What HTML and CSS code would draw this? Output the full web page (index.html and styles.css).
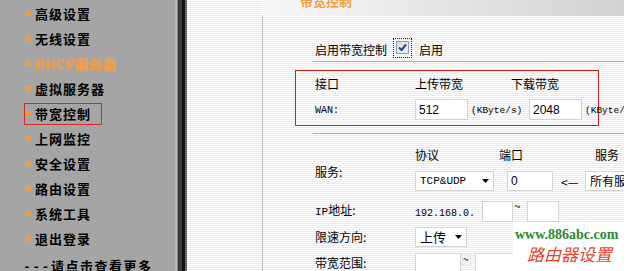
FILE: index.html
```html
<!DOCTYPE html>
<html lang="zh-CN">
<head>
<meta charset="utf-8">
<title>带宽控制</title>
<link rel="stylesheet" href="styles.css">
</head>
<body>
<div class="page">
  <nav class="sidebar">
    <div class="nav-item"><span class="nav-label"><span class="dot"></span>高级设置</span></div>
    <div class="nav-item"><span class="nav-label"><span class="dot"></span>无线设置</span></div>
    <div class="nav-item glow"><span class="nav-label"><span class="dot"></span>DHCP服务器</span></div>
    <div class="nav-item"><span class="nav-label"><span class="dot"></span>虚拟服务器</span></div>
    <div class="nav-item active"><span class="nav-label"><span class="dot"></span>带宽控制</span></div>
    <div class="nav-item"><span class="nav-label"><span class="dot"></span>上网监控</span></div>
    <div class="nav-item"><span class="nav-label"><span class="dot"></span>安全设置</span></div>
    <div class="nav-item"><span class="nav-label"><span class="dot"></span>路由设置</span></div>
    <div class="nav-item"><span class="nav-label"><span class="dot"></span>系统工具</span></div>
    <div class="nav-item"><span class="nav-label"><span class="dot"></span>退出登录</span></div>
    <div class="nav-more"><span class="dashes">---</span>请点击查看更多</div>
  </nav>
  <div class="divider"></div>
  <div class="content">
    <div class="gutter"></div>
    <div class="panel">
      <div class="panel-header"><span class="title">带宽控制</span></div>
      <div class="panel-body">
        <div class="enable-row">
          <span class="enable-text">启用带宽控制</span>
          <span class="check-focus"><span class="check-box"><svg width="11" height="11" viewBox="0 0 11 11"><path d="M2 5.5 L4.5 8 L9 2.5" fill="none" stroke="#22449a" stroke-width="2"/></svg></span></span>
          <span class="enable-on">启用</span>
        </div>
        <div class="bw-box">
          <div class="bw-head">
            <span class="col-label">接口</span>
            <span class="col-up">上传带宽</span>
            <span>下载带宽</span>
          </div>
          <div class="bw-row">
            <span class="col-label mono-s">WAN:</span>
            <span class="field w53">512</span>
            <span class="unit">(KByte/s)</span>
            <span class="field w53 gap3">2048</span>
            <span class="unit">(KByte/s)</span>
          </div>
        </div>
        <div class="sep"></div>
        <div class="svc">
          <span class="row-label svc-label">服务:</span>
          <div class="svc-cols">
            <div class="svc-head">
              <span class="h-proto">协议</span>
              <span class="h-port">端口</span>
              <span>服务</span>
            </div>
            <div class="svc-row">
              <span class="select w79"><span class="mono">TCP&amp;UDP</span><svg class="arrow" width="7" height="4" viewBox="0 0 7 4"><path d="M0 0H7L3.5 4Z" fill="#000"/></svg></span>
              <span class="field w46 port">0</span>
              <span class="back">&lt;—</span>
              <span class="select w80">所有服务</span>
            </div>
          </div>
        </div>
        <div class="form-row ip-row">
          <span class="row-label"><span class="mono-l">IP</span>地址:</span>
          <span class="ip-prefix">192.168.0.</span>
          <span class="field w31"></span>
          <span class="tilde">~</span>
          <span class="field w32"></span>
        </div>
        <div class="form-row">
          <span class="row-label">限速方向:</span>
          <span class="select w52">上传<svg class="arrow" width="7" height="4" viewBox="0 0 7 4"><path d="M0 0H7L3.5 4Z" fill="#000"/></svg></span>
        </div>
        <div class="form-row">
          <span class="row-label">带宽范围:</span>
          <span class="field w46"></span>
          <span class="tilde-box">~</span>
          <span class="field w50"></span>
        </div>
      </div>
    </div>
  </div>
</div>
<div class="watermark">
  <div class="wm-url">www.886abc.com</div>
  <div class="wm-name">路由器设置</div>
</div>
</body>
</html>
```

FILE: styles.css
```css
* { box-sizing: border-box; }
html, body { margin: 0; height: 271px; overflow: hidden; }
body {
  position: relative;
  font-family: "Noto Sans CJK SC", "Liberation Sans", sans-serif;
  font-size: 12px;
  line-height: 16px;
  color: #000;
  background: #fff;
}
.page { display: flex; height: 271px; }

/* sidebar */
.sidebar { width: 175px; flex: none; background: #a5a5a5; padding-top: 1px; }
.nav-item {
  height: 25px; display: flex; align-items: center; padding-left: 24px;
  font-weight: 700; font-size: 13px; letter-spacing: 1px; white-space: nowrap;
}
.nav-label {
  display: flex; align-items: center; height: 22px;
  border: 1px solid transparent; padding-right: 10px;
}
.nav-item.active .nav-label { border-color: #d42a2a; }
.dot {
  width: 5px; height: 5px; border-radius: 50%; background: #f59a3c;
  margin-left: 1px; margin-right: 4px; box-shadow: 0 0 1px #f7b46a;
}
.nav-item.glow { color: #f29a42; text-shadow: 0 0 1px #f7b070; }
.nav-more {
  margin-top: 7px; padding-left: 23px; font-weight: 700; font-size: 13px;
  letter-spacing: 1.5px; white-space: nowrap; line-height: 16px;
}
.dashes { font-family: "Liberation Mono", monospace; letter-spacing: 1.5px; }

.divider {
  width: 12px; flex: none;
  background: linear-gradient(to right, #b9b9b9 0 2px, #8a8a8a 2px 3px, #3c3c3c 3px 7px, #121212 7px 10px, #6a6a6a 10px 12px);
}

/* content */
.content {
  flex: 1; display: flex; min-width: 0;
  background: repeating-linear-gradient(to bottom, #ffffff 0 1px, #ebebeb 1px 2px);
}
.gutter { width: 75px; flex: none; }
.panel { flex: 1; display: flex; flex-direction: column; min-width: 0; }
.panel-header {
  height: 16px; overflow: hidden; flex: none;
  background: linear-gradient(to right, #f8f8f8, #d3d3d3);
  padding-left: 38px;
}
.title {
  display: block; margin-top: -7px; font-size: 13px; font-weight: 700;
  color: #f2a040; line-height: 16px; white-space: nowrap;
}
.panel-body { flex: 1; border-left: 1px solid #c4c4c4; white-space: nowrap; }

.enable-row {
  margin: 20px 0 0 50px; height: 26px; border-bottom: 1px solid #a9a9a9;
  display: flex; align-items: center; padding-left: 2px;
}
.enable-text { width: 78px; padding-top: 3px; }
.check-focus {
  width: 19px; height: 20px; border: 1px dotted #222;
  display: flex; align-items: center; justify-content: center; margin-top: -2px;
}
.check-box {
  width: 13px; height: 13px; border: 1px solid #8c9bb4;
  background: linear-gradient(135deg, #dcdcdc, #f6f6f6);
  display: flex; align-items: center; justify-content: center;
}
.enable-on { margin-left: 7px; padding-top: 3px; }

.bw-box {
  margin: 8px 0 0 32px; width: 304px; height: 56px;
  border: 1px solid #cc2020; padding: 5px 0 0 19px;
}
.bw-head { display: flex; height: 16px; }
.col-label { width: 100px; flex: none; }
.col-up { width: 96px; flex: none; }
.bw-row { display: flex; align-items: center; margin-top: 7px; height: 21px; }
.mono-s { font-family: "Liberation Mono", monospace; font-size: 10px; padding-top: 2px; }
.field {
  display: flex; align-items: center; flex: none;
  height: 21px; background: #fff; border: 1px solid #d2d2d2;
  padding-left: 3px; font-family: "Liberation Sans", sans-serif; font-size: 12px;
}
.w53 { width: 53px; }
.w46 { width: 46px; }
.w31 { width: 31px; }
.w32 { width: 32px; }
.w50 { width: 50px; }
.gap3 { margin-left: 3px; }
.unit {
  width: 55px; flex: none; margin-left: 3px; padding-top: 3px;
  font-family: "Liberation Mono", monospace; font-size: 9.5px;
}

.sep { margin: 7px 0 0 50px; border-top: 1px solid #a9a9a9; }

.svc { display: flex; margin: 13px 0 0 52px; }
.row-label { width: 100px; flex: none; }
.svc-label { align-self: center; margin-top: 6px; }
.svc-cols { display: flex; flex-direction: column; }
.svc-head { display: flex; height: 16px; }
.h-proto { width: 84px; }
.h-port { width: 96px; }
.svc-row { display: flex; align-items: center; margin-top: 8px; height: 20px; }
.select {
  display: flex; align-items: center; justify-content: space-between; flex: none;
  height: 20px; background: #fff; border: 1px solid #d2d2d2;
  padding: 0 4px 0 4px;
}
.select .arrow { flex: none; }
.mono { font-family: "Liberation Mono", monospace; font-size: 11px; }
.w79 { width: 79px; }
.w80 { width: 80px; }
.w52 { width: 52px; font-size: 13px; }
.port { margin-left: 13px; height: 20px; }
.back { width: 16px; margin-left: 8px; margin-right: 8px; padding-top: 2px; }

.form-row { display: flex; align-items: center; margin: 6px 0 0 52px; height: 20px; }
.ip-row { margin-top: 10px; }
.mono-l { font-family: "Liberation Mono", monospace; font-size: 11px; }
.ip-prefix {
  width: 67px; flex: none; padding-top: 5px;
  font-family: "Liberation Mono", monospace; font-size: 10px;
}
.tilde { width: 14px; flex: none; align-self: flex-start; line-height: 10px; padding-left: 1px; }
.tilde-box {
  width: 9px; height: 13px; flex: none; align-self: flex-start; margin: 0 4px 0 1px;
  font-size: 10px; line-height: 10px; border: 1px solid #e2e2e2; background: #f4f4f4;
}

/* watermark overlay */
.watermark {
  position: absolute; left: 513px; top: 223px; width: 111px; height: 48px;
  background: #fff;
}
.wm-url {
  padding: 4px 0 0 2px; font-family: "Liberation Serif", serif; font-weight: 700;
  font-size: 14px; line-height: 16px; color: #2f8a2f;
}
.wm-name {
  padding-left: 14px; font-size: 17px; line-height: 22px; color: #e2462c;
  font-style: italic;
}
```
